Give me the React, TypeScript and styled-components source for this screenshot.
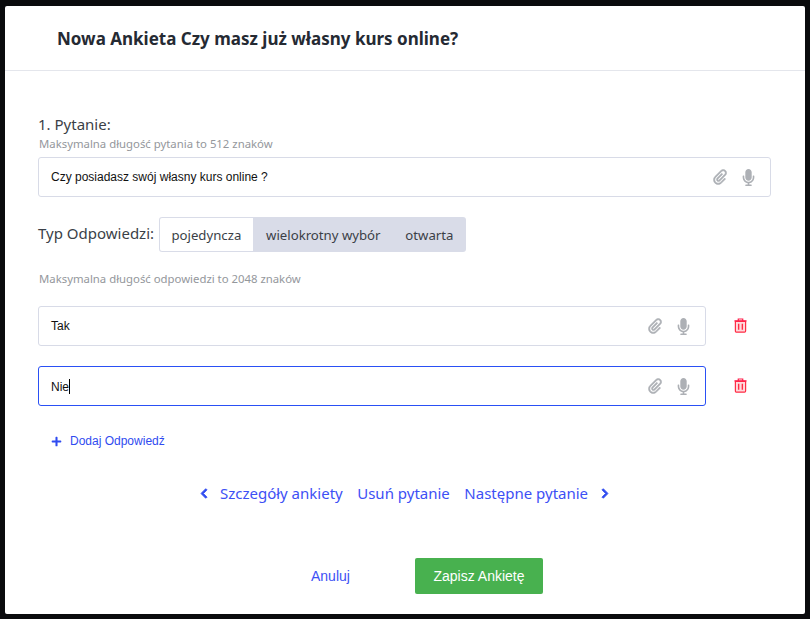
import { createGlobalStyle, styled } from 'styled-components';
import { FaChevronLeft, FaChevronRight, FaMicrophone, FaPlus } from 'react-icons/fa';
import { ImAttachment } from 'react-icons/im';

const GlobalStyle = createGlobalStyle`
  html, body {
    margin: 0;
    height: 619px;
    overflow: hidden;
    background: #0a0b0d;
    font-family: "Noto Sans", "Liberation Sans", sans-serif;
  }
`;

const TrashIcon = () => (
  <svg width="13" height="15" viewBox="0 0 14 16" fill="none">
    <path d="M1.5 3.5h11v10.5a1.2 1.2 0 0 1-1.2 1.2H2.7a1.2 1.2 0 0 1-1.2-1.2z" fill="#ffd9dc" stroke="#ff2d46" strokeWidth="1.3" />
    <path d="M0.5 3h13M4.6 3V1h4.8v2" stroke="#ff1f4b" strokeWidth="1.3" />
    <path d="M5 6v6.5M9 6v6.5" stroke="#ff2d46" strokeWidth="1.5" />
  </svg>
);

const InputIcons = () => (
  <Icons>
    <ClipIcon />
    <MicIcon />
  </Icons>
);

const App = () => {
  return (
    <Page>
      <GlobalStyle />
      <Modal>
        <Header>
          <Title>Nowa Ankieta Czy masz już własny kurs online?</Title>
        </Header>
        <Body>
          <QuestionLabel>1. Pytanie:</QuestionLabel>
          <Hint>Maksymalna długość pytania to 512 znaków</Hint>
          <Field>
            <FieldText>Czy posiadasz swój własny kurs online ?</FieldText>
            <InputIcons />
          </Field>

          <TypeRow>
            <TypeLabel>Typ Odpowiedzi:</TypeLabel>
            <Tabs>
              <Tab $active>pojedyncza</Tab>
              <Tab>wielokrotny wybór</Tab>
              <Tab>otwarta</Tab>
            </Tabs>
          </TypeRow>

          <AnswerHint>Maksymalna długość odpowiedzi to 2048 znaków</AnswerHint>

          <AnswerRow>
            <AnswerField>
              <FieldText>Tak</FieldText>
              <InputIcons />
            </AnswerField>
            <DeleteButton>
              <TrashIcon />
            </DeleteButton>
          </AnswerRow>
          <AnswerRow>
            <AnswerField $focused>
              <FieldText>
                Nie
                <Caret />
              </FieldText>
              <InputIcons />
            </AnswerField>
            <DeleteButton>
              <TrashIcon />
            </DeleteButton>
          </AnswerRow>

          <AddAnswer>
            <FaPlus size={11} />
            <span>Dodaj Odpowiedź</span>
          </AddAnswer>

          <Pager>
            <PagerChevronLeft />
            <PagerLink>Szczegóły ankiety</PagerLink>
            <PagerLink>Usuń pytanie</PagerLink>
            <PagerLink>Następne pytanie</PagerLink>
            <PagerChevronRight />
          </Pager>

          <Footer>
            <CancelButton>Anuluj</CancelButton>
            <SaveButton>Zapisz Ankietę</SaveButton>
          </Footer>
        </Body>
      </Modal>
    </Page>
  );
};

export default App;

const Page = styled.div`
  padding: 6px 5px 5px;
`;

const Modal = styled.div`
  width: 800px;
  height: 608px;
  background: #fff;
  border-radius: 2px;
  overflow: hidden;
`;

const Header = styled.div`
  height: 64px;
  padding-left: 52px;
  display: flex;
  align-items: center;
  border-bottom: 1px solid #e4e6ec;
`;

const Title = styled.h1`
  margin: 0;
  color: #252a33;
  font-size: 17px;
  font-weight: 700;
`;

const Body = styled.div`
  padding: 43px 34px 0 33px;
`;

const QuestionLabel = styled.div`
  color: #3b3f47;
  font-size: 15px;
  line-height: 20px;
`;

const Hint = styled.div`
  margin: 2px 0 5px 1px;
  color: #94979c;
  font-size: 11.35px;
  line-height: 16px;
`;

const Field = styled.div`
  height: 40px;
  box-sizing: border-box;
  padding: 0 15px 0 12px;
  display: flex;
  align-items: center;
  justify-content: space-between;
  background: #fff;
  border: 1px solid #d8dbe7;
  border-radius: 3px;
`;

const AnswerField = styled(Field)<{ $focused?: boolean }>`
  flex: 0 0 668px;
  border-color: ${(props) => (props.$focused ? '#2a50f5' : '#d8dbe7')};
`;

const FieldText = styled.div`
  color: #111;
  font-family: "Liberation Sans", Arial, sans-serif;
  font-size: 12px;
`;

const Caret = styled.span`
  display: inline-block;
  width: 1px;
  height: 15px;
  vertical-align: -3px;
  background: #000;
`;

const Icons = styled.div`
  display: flex;
  align-items: center;
  gap: 14px;
  color: #adb0b5;
`;

const ClipIcon = styled(ImAttachment)`
  width: 15px;
  height: 16px;
  stroke: currentColor;
  stroke-width: 0.6px;
`;

const MicIcon = styled(FaMicrophone)`
  width: 13px;
  height: 17px;
`;

const TypeRow = styled.div`
  margin-top: 20px;
  display: flex;
  align-items: center;
  gap: 5px;
`;

const TypeLabel = styled.span`
  color: #3b3f47;
  font-size: 15px;
  position: relative;
  top: -2px;
`;

const Tabs = styled.div`
  height: 35px;
  display: flex;
  background: #d9dce8;
  border-radius: 3px;
  overflow: hidden;
`;

const Tab = styled.div<{ $active?: boolean }>`
  padding: 0 12.4px;
  display: flex;
  align-items: center;
  color: #3b3f47;
  font-size: 13.2px;
  background: ${(props) => (props.$active ? '#fff' : 'transparent')};
  box-shadow: ${(props) => (props.$active ? 'inset 0 0 0 1px #d9dce8' : 'none')};
  border-radius: ${(props) => (props.$active ? '3px 0 0 3px' : '0')};
`;

const AnswerHint = styled(Hint)`
  margin: 19px 0 19px 1px;
`;

const AnswerRow = styled.div`
  margin-bottom: 20px;
  display: flex;
  align-items: center;
`;

const DeleteButton = styled.div`
  margin: 0 0 2px 28px;
  display: flex;
`;

const AddAnswer = styled.div`
  margin: 28px 0 0 13px;
  display: flex;
  align-items: center;
  gap: 8px;
  color: #2f4bf0;
  font-family: "Liberation Sans", Arial, sans-serif;
  font-size: 12px;
  line-height: 14px;
`;

const Pager = styled.div`
  margin-top: 35px;
  display: flex;
  justify-content: center;
  align-items: center;
  gap: 14.5px;
  color: #2f4bf0;
  font-size: 15px;
  line-height: 20px;
`;

const PagerLink = styled.span`
  color: #3d50f5;
`;

const PagerChevronLeft = styled(FaChevronLeft)`
  width: 8px;
  height: 11px;
  margin-right: -3px;
  stroke: currentColor;
  stroke-width: 40px;
`;

const PagerChevronRight = styled(FaChevronRight)`
  width: 8px;
  height: 11px;
  margin-left: -2px;
  stroke: currentColor;
  stroke-width: 40px;
`;

const Footer = styled.div`
  margin-top: 55px;
  display: flex;
  align-items: center;
  padding-left: 240px;
  font-family: "Liberation Sans", Arial, sans-serif;
  font-size: 14px;
`;

const CancelButton = styled.div`
  width: 137px;
  color: #3d50f5;
  padding-left: 33px;
  box-sizing: border-box;
`;

const SaveButton = styled.div`
  width: 128px;
  height: 36px;
  display: flex;
  align-items: center;
  justify-content: center;
  color: #fff;
  background: #48b14f;
  border-radius: 2px;
`;
